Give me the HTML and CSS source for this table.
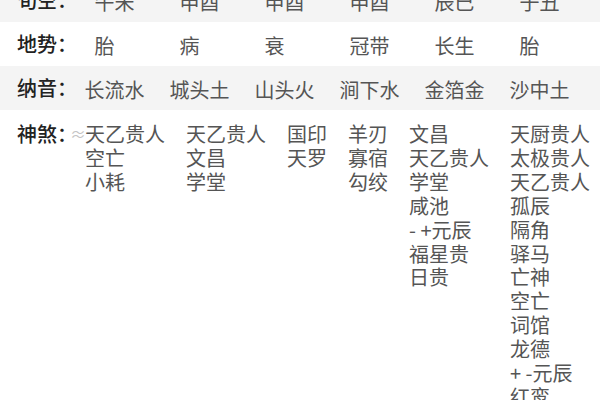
FILE: index.html
```html
<!DOCTYPE html>
<html lang="zh-CN">
<head>
<meta charset="utf-8">
<link rel="stylesheet" href="styles.css">
</head>
<body>
<div class="page">
  <div class="row row-gray">
    <div class="label">旬空：</div>
    <div class="cell">午未</div>
    <div class="cell">申酉</div>
    <div class="cell">申酉</div>
    <div class="cell">申酉</div>
    <div class="cell">辰巳</div>
    <div class="cell">子丑</div>
  </div>
  <div class="row">
    <div class="label">地势：</div>
    <div class="cell single">胎</div>
    <div class="cell single">病</div>
    <div class="cell single">衰</div>
    <div class="cell">冠带</div>
    <div class="cell">长生</div>
    <div class="cell single">胎</div>
  </div>
  <div class="row row-gray">
    <div class="label">纳音：</div>
    <div class="cell">长流水</div>
    <div class="cell">城头土</div>
    <div class="cell">山头火</div>
    <div class="cell">涧下水</div>
    <div class="cell">金箔金</div>
    <div class="cell">沙中土</div>
  </div>
  <div class="shensha">
    <div class="label">神煞：</div>
    <div class="lists">
      <span class="mark">≈</span>
      <div class="list">
        <div>天乙贵人</div><div>空亡</div><div>小耗</div>
      </div>
      <div class="list">
        <div>天乙贵人</div><div>文昌</div><div>学堂</div>
      </div>
      <div class="list">
        <div>国印</div><div>天罗</div>
      </div>
      <div class="list">
        <div>羊刃</div><div>寡宿</div><div>勾绞</div>
      </div>
      <div class="list">
        <div>文昌</div><div>天乙贵人</div><div>学堂</div><div>咸池</div><div>- +元辰</div><div>福星贵</div><div>日贵</div>
      </div>
      <div class="list">
        <div>天厨贵人</div><div>太极贵人</div><div>天乙贵人</div><div>孤辰</div><div>隔角</div><div>驿马</div><div>亡神</div><div>空亡</div><div>词馆</div><div>龙德</div><div>+ -元辰</div><div>红鸾</div>
      </div>
    </div>
  </div>
</div>
</body>
</html>
```

FILE: styles.css
```css
html, body {
  margin: 0;
  padding: 0;
  background: #ffffff;
}
body {
  font-family: "Noto Sans CJK SC", "Noto Sans", sans-serif;
  font-size: 20px;
  color: #555555;
  overflow: hidden;
}
.page {
  margin-top: -22px;
}
.row {
  display: grid;
  grid-template-columns: 55px repeat(6, 85px);
  height: 44px;
  align-items: center;
  padding-left: 17px;
  background: #ffffff;
}
.row-gray {
  background: #f4f4f4;
}
.label {
  color: #222222;
  font-weight: 500;
  white-space: nowrap;
  line-height: 24px;
}
.cell {
  text-align: center;
  white-space: nowrap;
  line-height: 24px;
  padding-top: 4px;
}
.cell.single {
  padding-right: 20px;
}
.shensha {
  display: grid;
  grid-template-columns: 55px auto;
  padding-left: 17px;
  padding-top: 12px;
  align-items: start;
}
.shensha .label {
  line-height: 23.9px;
}
.lists {
  display: flex;
  align-items: flex-start;
  gap: 21px;
  line-height: 23.9px;
}
.mark {
  color: #c4c4c4;
  font-size: 16px;
  width: 13px;
  margin-left: -2px;
  margin-right: -19px;
  line-height: 23.9px;
}
.list {
  white-space: nowrap;
}
```
